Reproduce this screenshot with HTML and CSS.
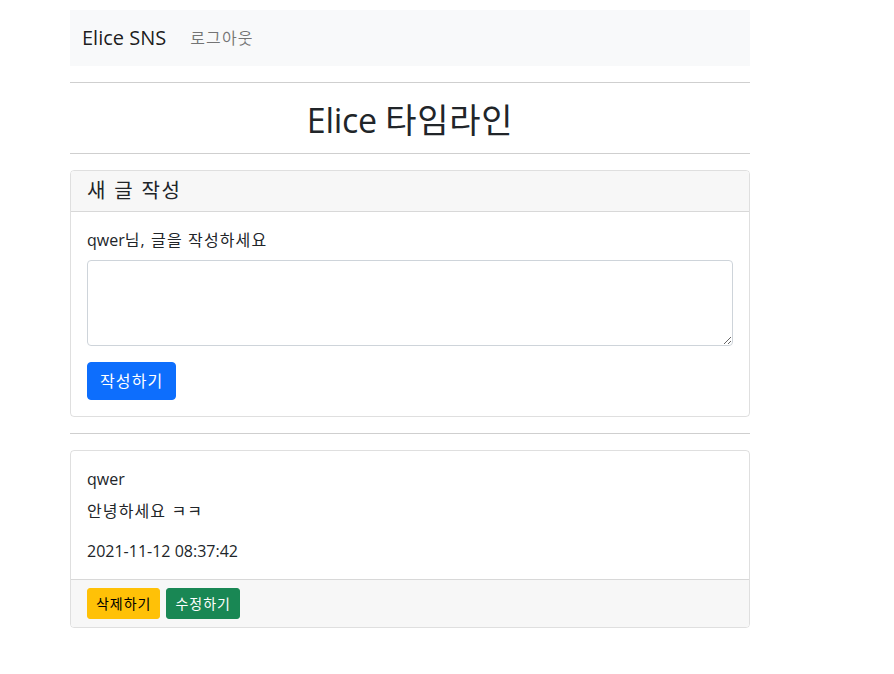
FILE: index.html
```html
<!DOCTYPE html>
<html lang="ko">
<head>
<meta charset="utf-8">
<title>Elice SNS</title>
<link rel="stylesheet" href="styles.css">
</head>
<body>
<div class="page">
  <nav class="navbar">
    <a class="brand">Elice SNS</a>
    <a class="nav-link ko">로그아웃</a>
  </nav>
  <hr class="rule">
  <h1 class="title">Elice <span class="title-ko">타임라인</span></h1>
  <hr class="rule">
  <section class="card">
    <div class="card-header ko">새 글 작성</div>
    <div class="card-body">
      <label class="form-label">qwer<span class="ko">님, 글을 작성하세요</span></label>
      <textarea class="form-control" rows="3"></textarea>
      <button class="btn btn-primary ko">작성하기</button>
    </div>
  </section>
  <hr class="rule">
  <section class="card">
    <div class="card-body">
      <div class="post-author">qwer</div>
      <p class="post-content ko">안녕하세요 ㅋㅋ</p>
      <p class="post-date">2021-11-12 08:37:42</p>
    </div>
    <div class="card-footer">
      <button class="btn btn-sm btn-warning ko">삭제하기</button>
      <button class="btn btn-sm btn-success ko">수정하기</button>
    </div>
  </section>
</div>
</body>
</html>
```
FILE: styles.css
```css
* { box-sizing: border-box; }
html, body { margin: 0; background: #fff; }
body {
  font-family: "Open Sans", "Noto Sans CJK KR", sans-serif;
  font-size: 16px;
  line-height: 1.5;
  color: #212529;
}
.ko { letter-spacing: 0.07em; }
.page {
  width: 680px;
  margin-left: 70px;
  padding-top: 10px;
}
.navbar {
  display: flex;
  align-items: center;
  height: 56px;
  padding: 0 12px;
  background: #f8f9fa;
}
.brand {
  font-size: 20px;
  line-height: 30px;
  color: rgba(0,0,0,.9);
  margin-right: 16px;
}
.nav-link {
  padding: 8px;
  color: rgba(0,0,0,.55);
}
.rule {
  margin: 16px 0;
  border: 0;
  border-top: 1px solid #cfcfcf;
  height: 0;
}
.title {
  margin: 0;
  font-size: 34px;
  font-weight: 400;
  line-height: 42px;
  text-align: center;
  height: 42px;
  letter-spacing: -0.3px;
}
.title-ko { letter-spacing: 0.02em; }
.title + .rule { margin-top: 12px; }
.card {
  border: 1px solid rgba(0,0,0,.125);
  border-radius: 4px;
  margin-bottom: 16px;
  overflow: hidden;
}
.card + .rule { margin-top: 0; }
.card-header {
  padding: 8px 16px;
  font-size: 20px;
  line-height: 24px;
  background: #f7f7f7;
  border-bottom: 1px solid rgba(0,0,0,.125);
  letter-spacing: 0.09em;
}
.card-body {
  padding: 16px;
  display: flex;
  flex-direction: column;
  align-items: flex-start;
}
.form-label {
  display: block;
  margin-bottom: 8px;
}
.form-control {
  display: block;
  width: 100%;
  height: 86px;
  padding: 6px 12px;
  font: inherit;
  border: 1px solid #ced4da;
  border-radius: 4px;
  resize: vertical;
  margin-bottom: 16px;
}
.btn {
  font-family: inherit;
  border: 1px solid transparent;
  border-radius: 4px;
  font-size: 16px;
  line-height: 24px;
  padding: 6px 12px;
  cursor: pointer;
}
.btn-primary { background: #0d6efd; color: #fff; border-color: #0d6efd; }
.btn-sm { font-size: 14px; line-height: 21px; padding: 4px 8px; border-radius: 3px; }
.btn-warning { background: #ffc107; color: #000; border-color: #ffc107; }
.btn-success { background: #198754; color: #fff; border-color: #198754; }
.post-author { margin-bottom: 8px; }
.post-content { margin: 0 0 16px; }
.post-date { margin: 0; }
.card-footer {
  padding: 8px 16px;
  background: #f7f7f7;
  border-top: 1px solid rgba(0,0,0,.125);
  display: flex;
  gap: 6px;
}
```
